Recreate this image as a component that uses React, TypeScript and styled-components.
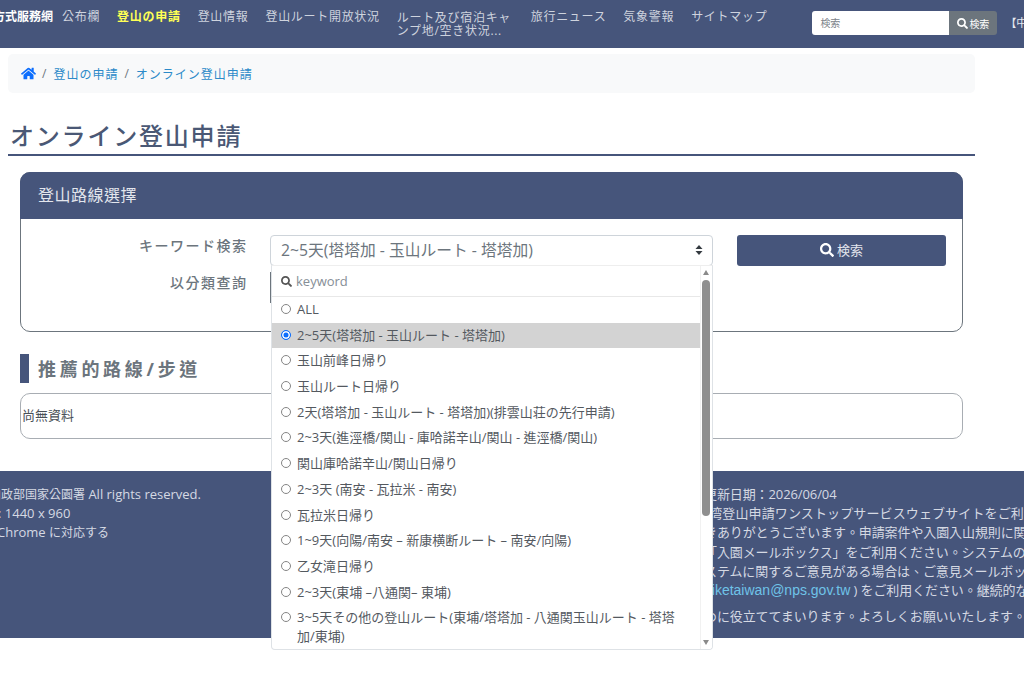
import styled, { createGlobalStyle } from 'styled-components';
import { FaHome, FaSearch } from 'react-icons/fa';

const FONT = `"Open Sans", "Noto Sans CJK TC", "Noto Sans CJK JP", sans-serif`;
const NAVY = '#46557b';

const GlobalStyle = createGlobalStyle`
  html, body {
    margin: 0;
    padding: 0;
    background: #fff;
    overflow: hidden;
  }
  * {
    box-sizing: border-box;
  }
  body {
    font-family: ${FONT};
    color: #6c757d;
  }
`;

const Viewport = styled.div`
  width: 1024px;
  height: 679px;
  overflow: hidden;
`;

const Header = styled.header`
  height: 48px;
  background: ${NAVY};
  display: flex;
  align-items: flex-start;
  white-space: nowrap;
`;

const Brand = styled.div`
  flex: none;
  width: 53px;
  direction: rtl;
  overflow: hidden;
  padding-top: 8px;
  font-size: 12px;
  line-height: 18px;
  font-weight: 700;
  color: #fff;
  margin-right: 9px;
`;

const NavList = styled.nav`
  display: flex;
  align-items: flex-start;
  gap: 17px;
  padding-top: 8px;
`;

const NavItem = styled.a<{ $active?: boolean; $wrap?: boolean }>`
  display: block;
  font-size: 12px;
  letter-spacing: 0.7px;
  line-height: ${(props) => (props.$wrap ? '13px' : '18px')};
  padding-top: ${(props) => (props.$wrap ? '3px' : '0')};
  color: ${(props) => (props.$active ? '#ffff55' : '#ced3de')};
  font-weight: ${(props) => (props.$active ? 700 : 400)};
  white-space: ${(props) => (props.$wrap ? 'normal' : 'nowrap')};
  width: ${(props) => (props.$wrap ? '117px' : 'auto')};
`;

const SearchForm = styled.form`
  display: flex;
  flex: none;
  margin: 11px 0 0 45px;
`;

const SearchInput = styled.div`
  width: 137px;
  height: 24px;
  background: #fff;
  border-radius: 3px 0 0 3px;
  padding-left: 8px;
  font-size: 10px;
  line-height: 24px;
  color: #7b8289;
`;

const SearchButton = styled.div`
  width: 48px;
  height: 24px;
  background: #6c757d;
  border-radius: 0 3px 3px 0;
  display: flex;
  align-items: center;
  justify-content: center;
  gap: 1px;
  font-size: 10px;
  color: #fff;
  svg {
    width: 11px;
    height: 11px;
  }
`;

const LangLink = styled.div`
  flex: none;
  margin: 14px 0 0 8px;
  font-size: 11px;
  line-height: 18px;
  color: #e6e8ee;
`;

const Main = styled.main`
  width: 975px;
  padding: 6px 0 0 8px;
`;

const Breadcrumb = styled.div`
  height: 39px;
  background: #f8f9fa;
  border-radius: 5px;
  display: flex;
  align-items: center;
  gap: 6px;
  padding-left: 13px;
  font-size: 12px;
  letter-spacing: 1px;
  color: #6c757d;
  svg {
    width: 15px;
    height: 15px;
    color: #0d6efd;
  }
`;

const Crumb = styled.a`
  color: #2b8ac9;
`;

const PageTitle = styled.h1`
  margin: 26px 0 0;
  height: 37px;
  padding-left: 2px;
  border-bottom: 2px solid ${NAVY};
  font-size: 24px;
  line-height: 33px;
  font-weight: 500;
  letter-spacing: 1.8px;
  color: #4a5875;
`;

const Card = styled.section`
  margin: 16px 12px 0;
  height: 160px;
  border: 1px solid #6c757d;
  border-radius: 10px;
  background: #fff;
`;

const CardHeader = styled.div`
  height: 47px;
  margin: -1px -1px 0;
  background: ${NAVY};
  border-radius: 10px 10px 0 0;
  padding-left: 18px;
  font-size: 16px;
  line-height: 47px;
  letter-spacing: 0.5px;
  color: #e3e6ed;
`;

const FormGrid = styled.div`
  display: grid;
  grid-template-columns: 225px 443px 209px;
  grid-template-rows: 31px 31px;
  column-gap: 24px;
  row-gap: 6px;
  padding-top: 16px;
`;

const FieldLabel = styled.label`
  margin-right: -1.5px;
  text-align: right;
  font-size: 14px;
  line-height: 22px;
  letter-spacing: 1.5px;
  font-weight: 500;
  color: #6c757d;
`;

const SelectWrap = styled.div`
  position: relative;
`;

const SelectBox = styled.div`
  height: 31px;
  border: 1px solid #ced4da;
  border-radius: 4px;
  background: #fff;
  display: flex;
  align-items: center;
  justify-content: space-between;
  padding: 0 9px 2px 10px;
  font-size: 15.75px;
  color: #6c757d;
`;

const SearchSubmit = styled.div`
  height: 31px;
  background: ${NAVY};
  border-radius: 3px;
  display: flex;
  align-items: center;
  justify-content: center;
  gap: 3px;
  padding-bottom: 2px;
  font-size: 13px;
  color: #e3e6ed;
  svg {
    width: 14px;
    height: 14px;
    color: #fff;
  }
`;

const SecondSelect = styled.div`
  height: 31px;
  border-left: 1px solid #6c757d;
`;

const Dropdown = styled.div`
  position: absolute;
  z-index: 5;
  top: 30px;
  left: 1px;
  width: 442px;
  height: 385px;
  background: #fff;
  border: 1px solid #dee2e6;
  border-top-color: #eee;
  border-radius: 0 0 4px 4px;
  overflow: hidden;
`;

const KeywordRow = styled.div`
  height: 31px;
  width: 429px;
  border-bottom: 1px solid #e8e8e8;
  display: flex;
  align-items: center;
  gap: 4px;
  padding-left: 9px;
  font-size: 13px;
  color: #868e96;
  svg {
    width: 11px;
    height: 11px;
    color: #555;
  }
`;

const OptionRow = styled.div<{ $selected?: boolean }>`
  width: 428px;
  min-height: 25.7px;
  display: flex;
  align-items: flex-start;
  gap: 6px;
  padding: 3px 24px 3px 9px;
  font-size: 13px;
  line-height: 19px;
  color: #54595f;
  background: ${(props) => (props.$selected ? '#d3d3d3' : 'transparent')};
`;

const Radio = styled.span<{ $checked?: boolean }>`
  flex: none;
  width: 10px;
  height: 10px;
  margin-top: 4px;
  border-radius: 50%;
  border: ${(props) => (props.$checked ? '1.5px solid #0d6efd' : '1px solid #858585')};
  background: ${(props) => (props.$checked ? '#0d6efd' : '#fff')};
  box-shadow: ${(props) => (props.$checked ? 'inset 0 0 0 1.5px #fff' : 'none')};
`;

const ScrollTrack = styled.div`
  position: absolute;
  top: 0;
  right: 0;
  bottom: 0;
  width: 12px;
  background: #fff;
  border-left: 1px solid #f1f1f1;
`;

const ScrollThumb = styled.div`
  position: absolute;
  top: 14px;
  left: 1px;
  width: 8px;
  height: 236px;
  border-radius: 4px;
  background: #8f8f8f;
`;

const ScrollArrow = styled.div<{ $down?: boolean }>`
  position: absolute;
  left: 2px;
  ${(props) => (props.$down ? 'bottom: 4px;' : 'top: 4px;')}
  width: 0;
  height: 0;
  border-left: 3.5px solid transparent;
  border-right: 3.5px solid transparent;
  ${(props) =>
    props.$down ? 'border-top: 5px solid #8a8a8a;' : 'border-bottom: 5px solid #8a8a8a;'}
`;

const SectionTitle = styled.h2`
  margin: 22px 12px 0;
  height: 29px;
  border-left: 9px solid ${NAVY};
  padding-left: 9px;
  font-size: 18px;
  line-height: 31px;
  letter-spacing: 3.7px;
  font-weight: 700;
  color: #6c757d;
`;

const EmptyBox = styled.div`
  margin: 10px 12px 0;
  height: 46px;
  border: 1px solid #a8adb3;
  border-radius: 10px;
  padding-left: 1px;
  font-size: 13px;
  line-height: 42px;
  color: #495057;
`;

const Footer = styled.footer`
  margin-top: 32px;
  width: 1024px;
  height: 167px;
  background: ${NAVY};
  display: flex;
  overflow: hidden;
  padding-top: 14px;
  font-size: 13px;
  line-height: 19.2px;
  color: #d5d9e3;
  white-space: nowrap;
`;

const FooterLeft = styled.div`
  flex: none;
  width: 704px;
`;

const FooterLine = styled.div<{ $shift?: number; $spacing?: number }>`
  margin-left: ${(props) => props.$shift ?? 0}px;
  letter-spacing: ${(props) => props.$spacing ?? -0.1}px;
`;

const CjkText = styled.span`
  font-size: 12px;
`;

const FooterRight = styled.div`
  flex: none;
  width: 500px;
`;

const MailLine = styled.div`
  height: 26px;
  letter-spacing: -0.1px;
`;

const MailLink = styled.a`
  font-family: "Liberation Sans", sans-serif;
  font-size: 14px;
  letter-spacing: 0;
  color: #6fc3e8;
`;

const ROUTES = [
  '玉山前峰日帰り',
  '玉山ルート日帰り',
  '2天(塔塔加 - 玉山ルート - 塔塔加)(排雲山荘の先行申請)',
  '2~3天(進涇橋/関山 - 庫哈諾辛山/関山 - 進涇橋/関山)',
  '関山庫哈諾辛山/関山日帰り',
  '2~3天 (南安 - 瓦拉米 - 南安)',
  '瓦拉米日帰り',
  '1~9天(向陽/南安 – 新康横断ルート – 南安/向陽)',
  '乙女滝日帰り',
  '2~3天(東埔 –八通関– 東埔)',
  '3~5天その他の登山ルート(東埔/塔塔加 - 八通関玉山ルート - 塔塔加/東埔)',
];

const CURRENT = '2~5天(塔塔加 - 玉山ルート - 塔塔加)';

export default function App() {
  return (
    <Viewport>
      <GlobalStyle />
      <Header>
        <Brand>山方式服務網</Brand>
        <NavList>
          <NavItem>公布欄</NavItem>
          <NavItem $active>登山の申請</NavItem>
          <NavItem>登山情報</NavItem>
          <NavItem>登山ルート開放状況</NavItem>
          <NavItem $wrap>ルート及び宿泊キャンプ地/空き状況...</NavItem>
          <NavItem>旅行ニュース</NavItem>
          <NavItem>気象警報</NavItem>
          <NavItem>サイトマップ</NavItem>
        </NavList>
        <SearchForm>
          <SearchInput>検索</SearchInput>
          <SearchButton>
            <FaSearch />
            検索
          </SearchButton>
        </SearchForm>
        <LangLink>【中文】</LangLink>
      </Header>

      <Main>
        <Breadcrumb>
          <FaHome />
          <span>/</span>
          <Crumb>登山の申請</Crumb>
          <span>/</span>
          <Crumb>オンライン登山申請</Crumb>
        </Breadcrumb>
        <PageTitle>オンライン登山申請</PageTitle>

        <Card>
          <CardHeader>登山路線選擇</CardHeader>
          <FormGrid>
            <FieldLabel>キーワード検索</FieldLabel>
            <SelectWrap>
              <SelectBox>
                {CURRENT}
                <svg width="8" height="12" viewBox="0 0 8 12">
                  <path d="M4 1 L7.5 5 H0.5 Z M4 11 L0.5 7 H7.5 Z" fill="#343a40" />
                </svg>
              </SelectBox>
              <Dropdown>
                <KeywordRow>
                  <FaSearch />
                  keyword
                </KeywordRow>
                <OptionRow>
                  <Radio />
                  ALL
                </OptionRow>
                <OptionRow $selected>
                  <Radio $checked />
                  {CURRENT}
                </OptionRow>
                {ROUTES.map((route) => (
                  <OptionRow key={route}>
                    <Radio />
                    <span>{route}</span>
                  </OptionRow>
                ))}
                <ScrollTrack>
                  <ScrollArrow />
                  <ScrollThumb />
                  <ScrollArrow $down />
                </ScrollTrack>
              </Dropdown>
            </SelectWrap>
            <SearchSubmit>
              <FaSearch />
              検索
            </SearchSubmit>
            <FieldLabel>以分類查詢</FieldLabel>
            <SecondSelect />
          </FormGrid>
        </Card>

        <SectionTitle>推薦的路線/步道</SectionTitle>
        <EmptyBox>尚無資料</EmptyBox>
      </Main>

      <Footer>
        <FooterLeft>
          <FooterLine $shift={-11} $spacing={0}>
            <CjkText>内政部国家公園署</CjkText> All rights reserved.
          </FooterLine>
          <FooterLine $shift={-2} $spacing={0}>: 1440 x 960</FooterLine>
          <FooterLine $shift={-3} $spacing={0}>
            Chrome <CjkText>に対応する</CjkText>
          </FooterLine>
        </FooterLeft>
        <FooterRight>
          <FooterLine>更新日期：2026/06/04</FooterLine>
          <FooterLine $shift={-8} $spacing={0.13}>台湾登山申請ワンストップサービスウェブサイトをご利用いただき</FooterLine>
          <FooterLine>きありがとうございます。申請案件や入園入山規則に関する</FooterLine>
          <FooterLine>「入園メールボックス」をご利用ください。システムの</FooterLine>
          <FooterLine>ステムに関するご意見がある場合は、ご意見メールボックス</FooterLine>
          <MailLine>
            <MailLink>hiketaiwan@nps.gov.tw</MailLink> ) をご利用ください。継続的なサービス
          </MailLine>
          <FooterLine>めに役立ててまいります。よろしくお願いいたします。</FooterLine>
        </FooterRight>
      </Footer>
    </Viewport>
  );
}
